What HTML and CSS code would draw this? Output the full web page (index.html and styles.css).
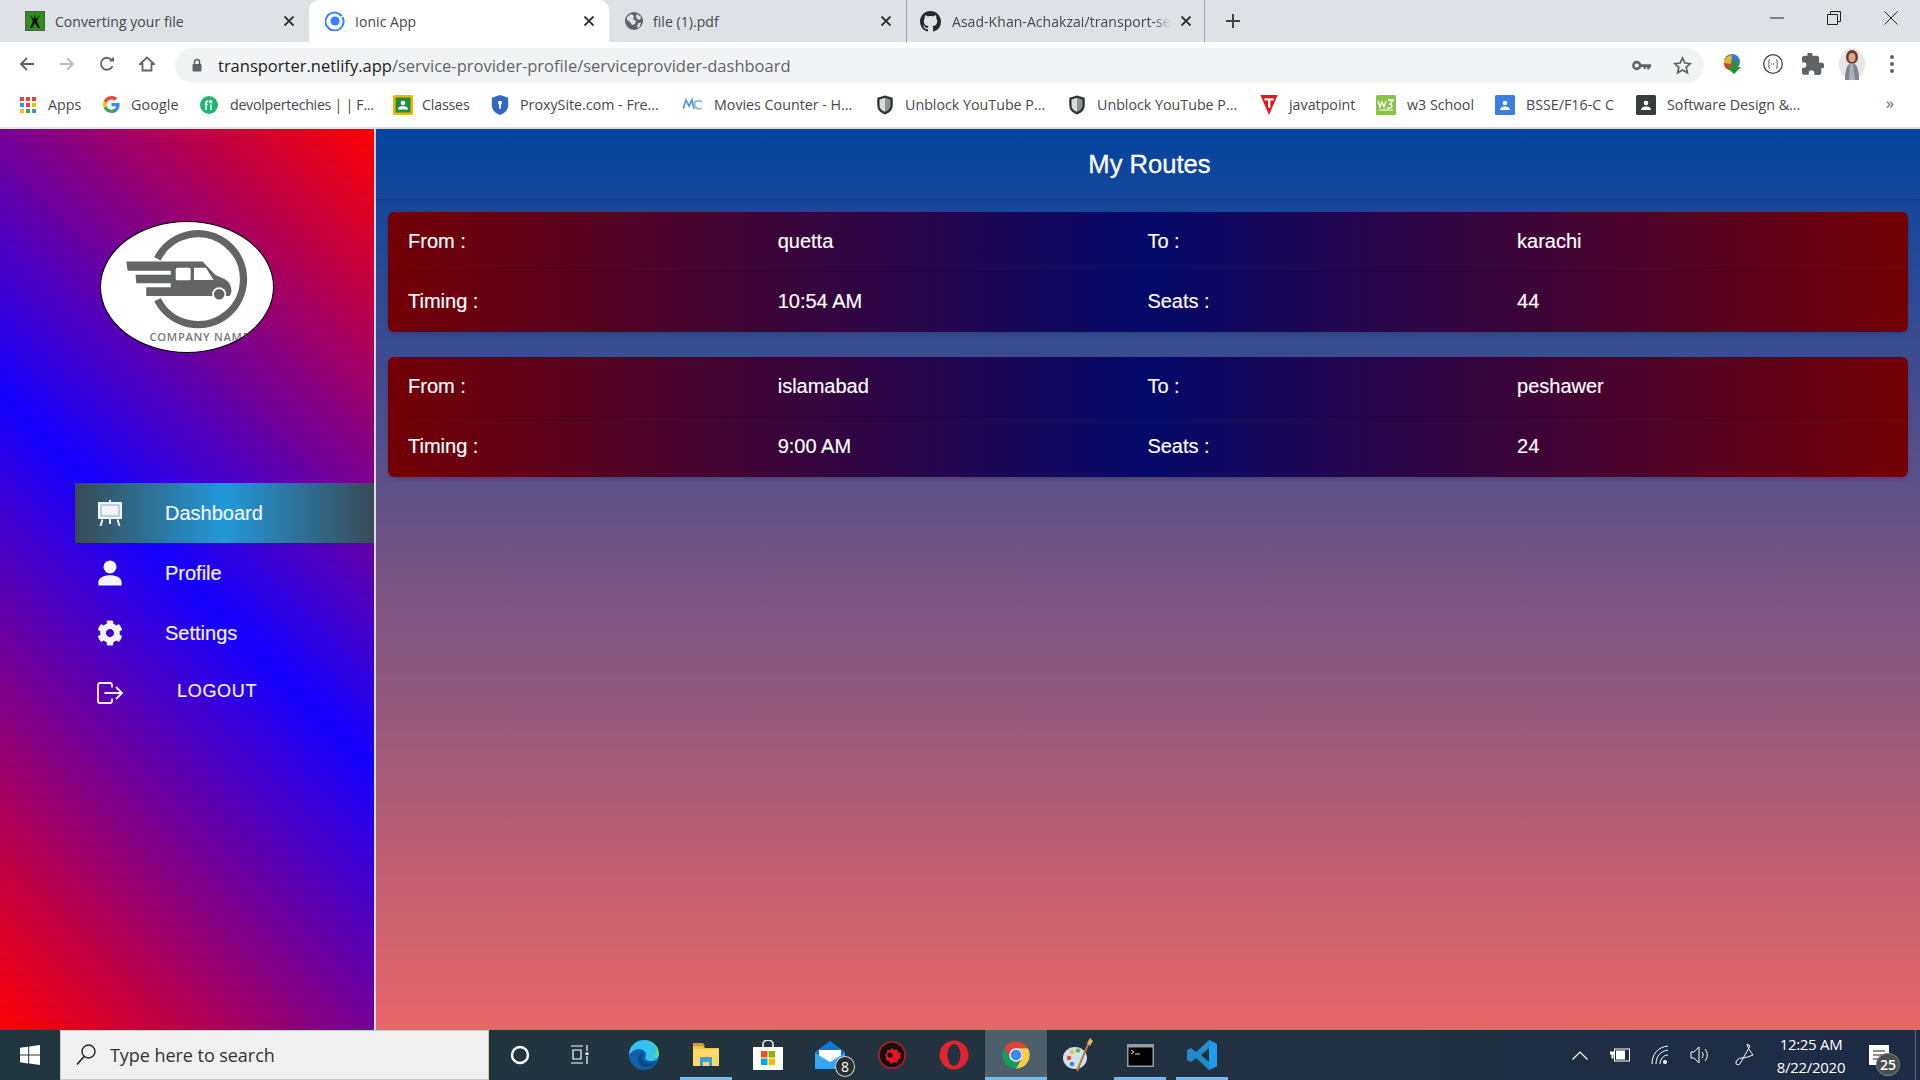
FILE: index.html
```html
<!DOCTYPE html>
<html lang="en">
<head>
<meta charset="utf-8">
<title>Ionic App</title>
<link rel="stylesheet" href="styles.css">
</head>
<body>
<div class="tabstrip">
  <div class="tab tab-a">
    <svg class="favicon" viewBox="0 0 20 20"><rect width="20" height="20" fill="#2f8f1e"/><rect width="20" height="20" fill="none" stroke="#555" stroke-width="2"/><path d="M10 3l1 5 4-4-3 6 3 7h-2l-3-5-3 5H5l3-7-3-6 4 4z" fill="#111"/></svg>
    <span class="tab-title">Converting your file</span>
    <svg class="tab-x" viewBox="0 0 12 12"><path d="M1.5 1.5l9 9M10.5 1.5l-9 9"/></svg>
  </div>
  <div class="tab tab-active">
    <svg class="favicon" viewBox="0 0 20 20"><circle cx="10" cy="10" r="4.6" fill="#3880ff"/><path d="M15.5 3.8A9 9 0 1 0 17.3 6" fill="none" stroke="#3880ff" stroke-width="2"/><circle cx="15.8" cy="4.2" r="1.3" fill="#3880ff"/></svg>
    <span class="tab-title">Ionic App</span>
    <svg class="tab-x" viewBox="0 0 12 12"><path d="M1.5 1.5l9 9M10.5 1.5l-9 9"/></svg>
  </div>
  <div class="tab tab-c">
    <svg class="favicon" viewBox="0 0 20 20"><circle cx="10" cy="10" r="9" fill="#5f6368"/><path d="M3 6l4-3 3 2-1 3 3 2-1 3-3 1-2-3-3-2zM13 3l4 3-1 3-3-1-1-3zM14 12l3 0-2 5-2-1z" fill="#dee1e6"/></svg>
    <span class="tab-title">file (1).pdf</span>
    <svg class="tab-x" viewBox="0 0 12 12"><path d="M1.5 1.5l9 9M10.5 1.5l-9 9"/></svg>
  </div>
  <div class="tab tab-d">
    <svg class="favicon favicon-gh" viewBox="0 0 16 16"><path fill="#24292e" d="M8 0C3.58 0 0 3.58 0 8c0 3.54 2.29 6.53 5.47 7.59.4.07.55-.17.55-.38 0-.19-.01-.82-.01-1.49-2.01.37-2.53-.49-2.69-.94-.09-.23-.48-.94-.82-1.13-.28-.15-.68-.52-.01-.53.63-.01 1.08.58 1.23.82.72 1.21 1.87.87 2.33.66.07-.52.28-.87.51-1.07-1.78-.2-3.64-.89-3.64-3.95 0-.87.31-1.59.82-2.15-.08-.2-.36-1.02.08-2.12 0 0 .67-.21 2.2.82.64-.18 1.32-.27 2-.27s1.36.09 2 .27c1.53-1.04 2.2-.82 2.2-.82.44 1.1.16 1.92.08 2.12.51.56.82 1.27.82 2.15 0 3.07-1.87 3.75-3.65 3.95.29.25.54.73.54 1.48 0 1.07-.01 1.93-.01 2.2 0 .21.15.46.55.38A8.01 8.01 0 0 0 16 8c0-4.42-3.58-8-8-8z"/></svg>
    <span class="tab-title"><span class="tab-fade">Asad-Khan-Achakzai/transport-se</span></span>
    <svg class="tab-x" viewBox="0 0 12 12"><path d="M1.5 1.5l9 9M10.5 1.5l-9 9"/></svg>
  </div>
  <svg class="newtab" viewBox="0 0 14 14"><path d="M7 0v14M0 7h14"/></svg>
  <div class="winbtns">
    <svg viewBox="0 0 14 14"><path d="M0 7h14"/></svg>
    <svg viewBox="0 0 14 14"><path d="M.5 3.5h10v10H.5zM3.5 3V.5h10v10H11"/></svg>
    <svg viewBox="0 0 14 14"><path d="M.5.5l13 13M13.500.5l-13 13"/></svg>
  </div>
</div>

<div class="toolbar">
  <div class="navs">
    <svg class="nav" viewBox="0 0 16 16"><path d="M15 8H2M8 2L2 8l6 6"/></svg>
    <svg class="nav nav-off" viewBox="0 0 16 16"><path d="M1 8h13M8 2l6 6-6 6"/></svg>
    <svg class="nav" viewBox="0 0 16 16"><path d="M13.500 10A6 6 0 1 1 13 4.500"/><path class="solid" d="M10 5.500h5v-5z"/></svg>
    <svg class="nav" viewBox="0 0 16 16"><path d="M8 1.500L1 8h2.500v6.500h9V8H15z"/></svg>
  </div>
  <div class="omnibox">
    <svg class="lock" viewBox="0 0 12 14"><path d="M3.500 6V4a2.500 2.500 0 0 1 5 0v2" fill="none" stroke="#5f6368" stroke-width="1.500"/><rect x="1.500" y="6" width="9" height="7.500" rx="1" fill="#5f6368"/></svg>
    <span class="url"><span class="url-host">transporter.netlify.app</span>/service-provider-profile/serviceprovider-dashboard</span>
    <svg class="key" viewBox="0 0 18 10"><circle cx="4.500" cy="5" r="3.200" fill="none" stroke="#5f6368" stroke-width="2.400"/><path d="M8 3.800h10v3h-1.500v2h-2v-2h-1.500v1.500h-2V6.500H8z" fill="#5f6368"/></svg>
    <svg class="star" viewBox="0 0 18 18"><path d="M9 1.800l2.200 4.800 5.200.6-3.900 3.500 1.100 5.200L9 13.300l-4.600 2.600 1.100-5.200L1.600 7.200l5.200-.6z"/></svg>
  </div>
  <div class="exts">
    <svg class="ext ext-idm" viewBox="0 0 22 22"><circle cx="12" cy="9" r="8" fill="#3b78c4"/><path d="M4 11a8 8 0 0 1 8-9l-1 9z" fill="#e9b22b"/><path d="M4 10c0 4 2 6 5 7l3-6z" fill="#d9412f"/><path d="M12 8h5v6h4l-7 7-8-7h6z" fill="#2f8f2e"/></svg>
    <svg class="ext" viewBox="0 0 22 22"><circle cx="11" cy="11" r="9.300" fill="#fff" stroke="#444" stroke-width="1.300"/><path d="M8 6.500c-1.500 0-1 2-1 3s-1 1.500-1 1.500 1 .5 1 1.500-.5 3 1 3M14 6.500c1.500 0 1 2 1 3s1 1.500 1 1.500-1 .5-1 1.500.5 3-1 3" fill="none" stroke="#444"/><path d="M9 11h4" stroke="#444" stroke-dasharray="1 1"/></svg>
    <svg class="ext" viewBox="0 0 18 18"><path fill="#5f6368" d="M15.500 8H14V4c0-1-.8-1.800-1.800-1.800h-3.700V1A2 2 0 0 0 4.500 1v1.200H1.900C.9 2.200 0 3 0 4v3.500h1.300a2.300 2.300 0 0 1 0 4.600H0v3.800c0 1 .9 1.900 1.900 1.900h3.600v-1.300a2.300 2.300 0 0 1 4.600 0V18h3.800c1 0 1.900-.9 1.900-1.900V12.500h.7a2.300 2.300 0 0 0 0-4.500z"/></svg>
    <svg class="avatar" viewBox="0 0 26 32"><ellipse cx="13" cy="16" rx="13" ry="16" fill="#e9e7e4"/><ellipse cx="13" cy="9" rx="6" ry="7" fill="#6d3b2a"/><ellipse cx="13" cy="9.500" rx="3.500" ry="4.500" fill="#d9a98e"/><path d="M6 32c0-12 3-17 7-17s7 5 7 17z" fill="#7d8793"/><path d="M11 16l3 0 2 16h-6z" fill="#a9b0b8"/></svg>
    <svg class="kebab" viewBox="0 0 4 18"><circle cx="2" cy="2" r="2"/><circle cx="2" cy="9" r="2"/><circle cx="2" cy="16" r="2"/></svg>
  </div>
</div>

<div class="bookmarks">
  <div class="bm bm1"><svg class="bmi bmi-apps" viewBox="0 0 16 16"><g fill="#ea4335"><rect width="4" height="4"/><rect x="6" width="4" height="4"/><rect x="12" width="4" height="4"/></g><g fill="#fbbc05"><rect y="12" width="4" height="4"/></g><rect y="6" width="4" height="4" fill="#4285f4"/><rect x="6" y="6" width="4" height="4" fill="#ea4335"/><rect x="12" y="6" width="4" height="4" fill="#fbbc05"/><rect x="6" y="12" width="4" height="4" fill="#34a853"/><rect x="12" y="12" width="4" height="4" fill="#4285f4"/></svg><span>Apps</span></div>
  <div class="bm bm2"><svg class="bmi" viewBox="0 0 18 18"><path fill="#4285f4" d="M17.600 9.200c0-.6-.1-1.200-.2-1.800H9v3.500h4.800a4 4 0 0 1-1.800 2.700v2.200h2.900c1.700-1.600 2.700-3.900 2.700-6.600z"/><path fill="#34a853" d="M9 18c2.400 0 4.500-.8 5.900-2.200L12 13.600c-.8.500-1.800.9-3 .9-2.300 0-4.300-1.600-5-3.700H1v2.300A9 9 0 0 0 9 18z"/><path fill="#fbbc05" d="M4 10.700a5.400 5.400 0 0 1 0-3.400V5H1a9 9 0 0 0 0 8z"/><path fill="#ea4335" d="M9 3.600c1.300 0 2.500.5 3.400 1.300l2.600-2.600A9 9 0 0 0 1 5l3 2.300c.7-2.100 2.700-3.700 5-3.700z"/></svg><span>Google</span></div>
  <div class="bm bm3"><svg class="bmi" viewBox="0 0 18 18"><circle cx="9" cy="9" r="9" fill="#21b573"/><path d="M6 14V7.500c0-2 1-2.500 2.300-2.500M4.700 8.500h3M11 8.500V14M10 5h1.500v1.500H10z" fill="none" stroke="#fff" stroke-width="1.500"/></svg><span>devolpertechies | | F...</span></div>
  <div class="bm bm4"><svg class="bmi bmi-wide" viewBox="0 0 20 20"><rect width="20" height="20" rx="1.500" fill="#f4b400"/><rect x="2.500" y="2.500" width="15" height="15" fill="#1e8e3e"/><circle cx="10" cy="8" r="2.300" fill="#fff"/><path d="M5 14.500c0-2.500 2.500-3.500 5-3.500s5 1 5 3.500z" fill="#fff"/></svg><span>Classes</span></div>
  <div class="bm bm5"><svg class="bmi" viewBox="0 0 18 22"><path d="M9 0l9 3v8c0 6-4 9-9 11-5-2-9-5-9-11V3z" fill="#3367c4"/><circle cx="9" cy="8.500" r="2.200" fill="#fff"/><rect x="8" y="9" width="2" height="6" fill="#fff"/></svg><span>ProxySite.com - Fre...</span></div>
  <div class="bm bm6"><svg class="bmi bmi-wide" viewBox="0 0 20 14"><path d="M0 11L3 2l3 6 3-6 2 9" fill="none" stroke="#5a9bd5" stroke-width="1.800"/><path d="M19 4c-5-3-9 0-7 4s5 3 7 2" fill="none" stroke="#9bb9d6" stroke-width="1.800"/></svg><span>Movies Counter - H...</span></div>
  <div class="bm bm7"><svg class="bmi" viewBox="0 0 18 22"><path d="M9 .5l8.500 2.500v8c0 5.500-3.500 8.500-8.500 10.500C4 19.500.5 16.500.5 11V3z" fill="#2f3337"/><path d="M9 3L3 5v6c0 4 2.500 6 6 7.500z" fill="#d9dbdc"/><path d="M9 3l6 2v6c0 4-2.500 6-6 7.500z" fill="#8f9396"/></svg><span>Unblock YouTube P...</span></div>
  <div class="bm bm8"><svg class="bmi" viewBox="0 0 18 22"><path d="M9 .5l8.500 2.500v8c0 5.500-3.500 8.500-8.500 10.500C4 19.500.5 16.500.5 11V3z" fill="#2f3337"/><path d="M9 3L3 5v6c0 4 2.500 6 6 7.500z" fill="#d9dbdc"/><path d="M9 3l6 2v6c0 4-2.500 6-6 7.500z" fill="#8f9396"/></svg><span>Unblock YouTube P...</span></div>
  <div class="bm bm9"><svg class="bmi" viewBox="0 0 19 22"><path d="M0 0h19l-9.500 22z" fill="#e8141c"/><path d="M4.500 3.500h10v2.500h-3.500v8H8.500V6h-4z" fill="#fff"/></svg><span>javatpoint</span></div>
  <div class="bm bm10"><svg class="bmi bmi-wide" viewBox="0 0 20 20"><rect width="20" height="20" rx="1.500" fill="#8bc34a"/><path d="M2 6l2 6 2-5 2 5 2-6M12 5h5l-3 4c3 0 3 5-3 4" fill="none" stroke="#fff" stroke-width="1.300"/><path d="M3 15h14" stroke="#d7edbd" stroke-width="1.500"/></svg><span>w3 School</span></div>
  <div class="bm bm11"><svg class="bmi bmi-wide" viewBox="0 0 20 20"><rect width="20" height="20" rx="1.500" fill="#3b7de0"/><circle cx="10" cy="8" r="2.300" fill="#fff"/><path d="M5 15c0-2.500 2.500-3.500 5-3.500s5 1 5 3.500z" fill="#fff"/></svg><span>BSSE/F16-C C</span></div>
  <div class="bm bm12"><svg class="bmi bmi-wide" viewBox="0 0 20 20"><rect width="20" height="20" rx="1.500" fill="#3a3d40"/><circle cx="10" cy="8" r="2.300" fill="#fff"/><path d="M5 15c0-2.500 2.500-3.500 5-3.500s5 1 5 3.500z" fill="#fff"/></svg><span>Software Design &amp;...</span></div>
  <div class="bm-more">»</div>
</div>

<div class="app">
  <aside class="sidebar">
    <div class="logo">
      <svg class="logo-art" viewBox="122 65 518 392">
        <path d="M292 176A137 137 0 1 1 292 299" fill="none" stroke="#636466" stroke-width="22"/>
        <path fill="#636466" d="M198 184H428L466 224L495 238Q516 250 515 276L510 288H258L258 262H332V250H228L226 224H332V212H202Z"/>
        <rect x="347" y="203" width="45" height="38" rx="5" fill="#fff"/>
        <path d="M402 203H438L461 240H402Z" fill="#fff"/>
        <circle cx="478" cy="283" r="21" fill="#fff"/>
        <circle cx="478" cy="283" r="16" fill="#636466"/>
        <text class="logo-text" x="268" y="424">COMPANY NAME</text>
      </svg>
    </div>
    <nav class="menu">
      <a class="menu-item menu-active">
        <svg class="menu-icon" viewBox="0 0 26 26"><path d="M13 0v2" stroke="#f3f4fa" stroke-width="2"/><rect x="1" y="2" width="24" height="17" fill="#f3f4fa"/><rect x="3.500" y="4.500" width="19" height="12" fill="#2c6e8d" opacity=".55"/><rect x="4.500" y="5.500" width="17" height="10" fill="#f3f4fa"/><path d="M5.500 19.500L3.500 26M13 19v5M20.500 19.500l2 6.500" stroke="#f3f4fa" stroke-width="2" fill="none"/></svg>
        <span>Dashboard</span>
      </a>
      <a class="menu-item">
        <svg class="menu-icon" viewBox="0 0 26 28"><circle cx="13" cy="7.500" r="7" fill="#f3f4fa"/><path d="M.5 27.500V24c0-5 6-7.500 12.500-7.500S25.500 19 25.500 24v3.500z" fill="#f3f4fa"/></svg>
        <span>Profile</span>
      </a>
      <a class="menu-item">
        <svg class="menu-icon" viewBox="0 0 512 512"><path fill="#f3f4fa" d="M487.400 315.700l-42.600-24.600c4.300-23.200 4.300-47 0-70.200l42.600-24.600c4.900-2.800 7.100-8.600 5.500-14-11.100-35.600-30-67.800-54.700-94.600-3.800-4.100-10-5.100-14.800-2.300L380.800 110c-17.900-15.400-38.500-27.300-60.800-35.100V25.800c0-5.600-3.900-10.500-9.400-11.700-36.700-8.200-74.300-7.800-109.200 0-5.500 1.200-9.400 6.100-9.400 11.700V75c-22.200 7.900-42.800 19.800-60.800 35.100L88.700 85.500c-4.900-2.800-11-1.900-14.800 2.300-24.700 26.700-43.600 58.900-54.700 94.600-1.700 5.400.6 11.200 5.500 14L67.300 221c-4.300 23.200-4.300 47 0 70.200l-42.600 24.600c-4.900 2.800-7.100 8.600-5.500 14 11.100 35.600 30 67.800 54.700 94.600 3.800 4.100 10 5.100 14.800 2.300l42.600-24.600c17.900 15.400 38.500 27.300 60.800 35.100v49.200c0 5.600 3.900 10.500 9.400 11.700 36.700 8.200 74.300 7.800 109.200 0 5.500-1.200 9.400-6.100 9.400-11.700v-49.200c22.200-7.900 42.800-19.800 60.800-35.100l42.600 24.600c4.900 2.800 11 1.900 14.800-2.300 24.700-26.700 43.600-58.900 54.700-94.600 1.500-5.500-.7-11.300-5.600-14.100zM256 336c-44.100 0-80-35.900-80-80s35.900-80 80-80 80 35.900 80 80-35.900 80-80 80z"/></svg>
        <span>Settings</span>
      </a>
      <a class="menu-item menu-logout">
        <svg class="menu-icon" viewBox="0 0 26 22"><path d="M15 5.500V3c0-1.200-.8-2-2-2H3C1.800 1 1 1.800 1 3v16c0 1.200.8 2 2 2h10c1.200 0 2-.8 2-2v-2.500M7.500 11H24.500M19 5l6 6-6 6" fill="none" stroke="#f3f4fa" stroke-width="1.800"/></svg>
        <span>LOGOUT</span>
      </a>
    </nav>
  </aside>
  <main class="content">
    <header class="header"><h1>My Routes</h1></header>
    <section class="routes">
      <article class="card">
        <div class="row row-line"><span>From :</span><span>quetta</span><span>To :</span><span>karachi</span></div>
        <div class="row row-last"><span>Timing :</span><span>10:54 AM</span><span>Seats :</span><span>44</span></div>
      </article>
      <article class="card">
        <div class="row row-line"><span>From :</span><span>islamabad</span><span>To :</span><span>peshawer</span></div>
        <div class="row row-last"><span>Timing :</span><span>9:00 AM</span><span>Seats :</span><span>24</span></div>
      </article>
    </section>
  </main>
</div>

<footer class="taskbar">
  <svg class="win" viewBox="0 0 20 20"><path fill="#fff" d="M0 2.800l8.200-1.100v7.900H0zM9.200 1.500L20 0v9.600H9.200zM0 10.500h8.200v7.900L0 17.200zM9.200 10.500H20V20L9.200 18.500z"/></svg>
  <div class="search">
    <svg class="search-icon" viewBox="0 0 20 22"><circle cx="12.500" cy="7.500" r="6.500" fill="none" stroke="#222" stroke-width="1.400"/><path d="M8 12.500L1 20.500" stroke="#222" stroke-width="1.600"/></svg>
    <span>Type here to search</span>
  </div>
  <div class="tasks">
    <div class="task"><svg class="ti ti-cortana" viewBox="0 0 20 20"><circle cx="10" cy="10" r="8" fill="none" stroke="#fff" stroke-width="2.400"/></svg></div>
    <div class="task task-view"><svg class="ti ti-view" viewBox="0 0 20 20"><path d="M1 1h12M3 5h8v9H3zM1 18h12M17 0v6M17 11v8" fill="none" stroke="#fff" stroke-width="1.200"/><rect x="15.500" y="7.500" width="3" height="2.500" fill="#fff"/></svg></div>
    <div class="task"><svg class="ti" viewBox="0 0 30 30"><circle cx="15" cy="15" r="15" fill="#0d62ab"/><path d="M0 15C0 6 7 0 15 0c9 0 15 7 15 14 0 5-4 7-8 7-3 0-6-1-6-3 0-1 1-1 1-3 0-3-3-6-7-6-6 0-10 6-10 6z" fill="#35c1f1"/><path d="M30 14c0-7-6-14-15-14 6 0 11 4 12 9 1 4-1 6-4 7 4 2 7 1 7-2z" fill="#5fd97a"/><path d="M9 21c1 4 4 6 8 6 4 0 8-2 10-5-3 2-9 2-12-.5-3-2.500-3-7-1-9-3 1-6 5-5 8.500z" fill="#0a4a85"/></svg></div>
    <div class="task task-run"><svg class="ti ti-28" viewBox="0 0 28 28"><path d="M1 4h10l2 3h14v18H1z" fill="#f2c14b"/><path d="M1 2h10l2 3H1z" fill="#d39a22"/><path d="M1 8h26v17H1z" fill="#ffd767"/><path d="M8 25v-9h12v9h-3v-4h-6v4z" fill="#3f9fe6"/></svg></div>
    <div class="task"><svg class="ti ti-30" viewBox="0 0 30 30"><path d="M10 8V4a5 4 0 0 1 10 0v4" fill="none" stroke="#d9d9d9" stroke-width="1.800"/><rect y="7" width="30" height="23" fill="#fff"/><rect x="8" y="11" width="6.500" height="6.500" fill="#f25022"/><rect x="15.500" y="11" width="6.500" height="6.500" fill="#7fba00"/><rect x="8" y="18.500" width="6.500" height="6.500" fill="#00a4ef"/><rect x="15.500" y="18.500" width="6.500" height="6.500" fill="#ffb900"/></svg></div>
    <div class="task"><svg class="ti ti-30" viewBox="0 0 30 30"><path d="M15 1L0 12v17h30V12z" fill="#0f78d4"/><path d="M4 10h22v8l-11 6-11-6z" fill="#fff"/><path d="M0 13l15 9 15-9v16H0z" fill="#35a6ef"/></svg><span class="badge">8</span></div>
    <div class="task"><svg class="ti ti-28" viewBox="0 0 28 28"><circle cx="14" cy="14" r="13" fill="#111" stroke="#c8161d" stroke-width="1.500"/><path d="M14 7l2 2 3-1 1 3 3 1-1 3 1 2-3 2-1 3-3-1-3 2-2-3-3-1 0-3-1-2 2-2 0-3 3 0z" fill="#e3171e"/><circle cx="12" cy="14" r="2.500" fill="#111"/><path d="M18 10l3 4h-2v5h-2v-5h-2z" fill="#e3171e"/></svg></div>
    <div class="task"><svg class="ti ti-30" viewBox="0 0 30 30"><circle cx="15" cy="15" r="14.500" fill="#e0232e"/><ellipse cx="15" cy="15" rx="6.500" ry="11" fill="#22333f"/></svg></div>
    <div class="task task-on"><svg class="ti ti-28" viewBox="3.500 3.500 41 41"><path fill="#db4437" d="M24 4A20 20 0 0 1 41.320 14H24A10 10 0 0 0 15.340 29L6.680 14A20 20 0 0 1 24 4z"/><path fill="#0f9d58" d="M6.680 14L15.340 29A10 10 0 0 0 32.660 29L24 44A20 20 0 0 1 6.680 14z"/><path fill="#ffcd40" d="M41.320 14A20 20 0 0 1 24 44L32.660 29A10 10 0 0 0 24 14z"/><circle cx="24" cy="24" r="10" fill="#fff"/><circle cx="24" cy="24" r="8" fill="#4285f4"/></svg></div>
    <div class="task"><svg class="ti" viewBox="0 0 30 34"><ellipse cx="12" cy="20" rx="12" ry="11" fill="#cfe2ef"/><circle cx="6" cy="20" r="2.300" fill="#e2473a"/><circle cx="9" cy="14" r="2.300" fill="#f3c33b"/><circle cx="15" cy="12.500" r="2.300" fill="#5cb85c"/><circle cx="9" cy="26" r="2.300" fill="#3d8dd6"/><path d="M14 33L26 4" stroke="#b57a3a" stroke-width="2"/><path d="M24 5l3-5 3 3-3 5z" fill="#e5b272"/></svg></div>
    <div class="task task-run"><svg class="ti ti-term" viewBox="0 0 27 23"><rect width="27" height="23" fill="#9a9da0"/><rect x="1.500" y="3.500" width="24" height="18" fill="#000"/><path d="M4 6l3 2-3 2M8 10h5" stroke="#ddd" stroke-width="1" fill="none"/></svg></div>
    <div class="task task-run"><svg class="ti ti-30" viewBox="0 0 30 30"><path d="M22 0l8 4v22l-8 4L9 18l-5 4-4-2V10l4-2 5 4z" fill="#2489ca"/><path d="M22 8l-8 7 8 7z" fill="#22303c"/><path d="M22 0l8 4v22l-8 4z" fill="#1f9cf0"/></svg></div>
  </div>
  <div class="tray">
    <svg class="chev" viewBox="0 0 16 9"><path d="M.500 8.500L8 1l7.500 7.500"/></svg>
    <svg class="tri tri-bat" viewBox="0 0 20 13"><rect x="4.500" y=".5" width="15" height="12" fill="none" stroke="#fff"/><rect x="6" y="2" width="9" height="9" fill="#fff"/><path d="M0 3h5v3H3.500v4h-2V6H0z" fill="#fff"/></svg>
    <svg class="tri" viewBox="0 0 18 20"><path d="M1 19C1 9 7 2 17 1M5 19C5 12 9 6 17 5M9 19c0-4 3-9 8-9" fill="none" stroke="#fff" stroke-width="1"/><circle cx="14" cy="17" r="2" fill="#fff"/></svg>
    <svg class="tri tri-vol" viewBox="0 0 20 20"><path d="M1 7h3l5-5v16l-5-5H1zM12 7c1.500 2 1.500 4 0 6M15 4c3 4 3 8 0 12" fill="none" stroke="#fff" stroke-width="1"/></svg>
    <svg class="tri tri-pen" viewBox="0 0 20 24"><path d="M12 1l3 2-9 16c-1 3-5 4-5 1s3-5 6-5c4 0 8-2 11-3-2-3-5-6-6-11z" fill="none" stroke="#fff" stroke-width="1"/></svg>
    <div class="clock"><div>12:25 AM</div><div>8/22/2020</div></div>
    <div class="notif">
      <svg class="notif-icon" viewBox="0 0 20 20"><rect width="20" height="20" fill="#fff"/><path d="M4 6h12M4 10h12M4 14h12" stroke="#222" stroke-width="1.200"/></svg>
      <span class="notif-count">25</span>
    </div>
  </div>
</footer>
</body>
</html>
```

FILE: styles.css
```css
* { box-sizing: border-box; }
html, body { margin: 0; height: 100%; }
body {
  width: 1920px; height: 1080px; overflow: hidden;
  display: flex; flex-direction: column;
  font-family: "Liberation Sans", Arial, sans-serif;
}
svg { display: block; flex: none; }

/* browser chrome */
.tabstrip {
  height: 42px; flex: none; background: #dee1e6;
  display: flex; align-items: stretch; padding-left: 9px;
  font-family: "Open Sans", sans-serif; font-size: 14px; letter-spacing: .05px; color: #45484d;
}
.tab { width: 300px; display: flex; align-items: center; padding-left: 16px; padding-right: 14px; flex: none; }
.tab-active { background: #fff; border-radius: 10px 10px 0 0; }
.tab-c { width: 298px; border-right: 1px solid #9ea1a6; padding-left: 15px; }
.tab-c .favicon { margin-right: 9px; }
.tab-d { width: 298px; border-right: 1px solid #9ea1a6; padding-left: 13px; padding-right: 12px; }
.favicon { width: 20px; height: 20px; margin-right: 10px; }
.favicon-gh { margin-right: 11px; width: 21px; height: 21px; }
.tab-title { flex: 1; white-space: nowrap; }
.tab-fade { display: inline-block; -webkit-mask-image: linear-gradient(90deg, #000 92%, transparent); mask-image: linear-gradient(90deg, #000 92%, transparent); }
.tab-x { width: 12px; height: 12px; fill: none; stroke: #333; stroke-width: 1.800; }
.newtab { width: 14px; height: 14px; margin: 14px 0 0 21px; fill: none; stroke: #444; stroke-width: 2; }
.winbtns { margin-left: auto; display: flex; gap: 43px; padding: 11px 22px 0 0; }
.winbtns svg { width: 14px; height: 14px; fill: none; stroke: #222; stroke-width: 1; }

.toolbar { height: 42px; flex: none; background: #fff; display: flex; align-items: center; }
.navs { display: flex; gap: 24px; padding: 1px 0 0 19px; width: 175px; }
.nav { width: 16px; height: 16px; fill: none; stroke: #5f6368; stroke-width: 1.800; }
.nav-off { stroke: #b9bbbe; }
.nav .solid { fill: #5f6368; stroke: none; }
.omnibox {
  width: 1529px; height: 35px; margin-top: 4px; background: #f1f3f4; border-radius: 18px;
  display: flex; align-items: center; padding-left: 16px;
  font-family: "Open Sans", sans-serif; font-size: 16.500px; color: #5f6368;
}
.lock { width: 12px; height: 14px; margin-right: 15px; }
.url { flex: 1; white-space: nowrap; }
.url-host { color: #202124; }
.key { width: 19px; height: 11px; margin-right: 22px; }
.star { width: 19px; height: 19px; margin-right: 12px; fill: none; stroke: #5f6368; stroke-width: 1.600; }
.exts { display: flex; align-items: center; padding: 2px 0 0 16px; }
.ext { width: 22px; height: 22px; margin-right: 18px; }
.ext-idm { margin-right: 20px; }
.avatar { width: 26px; height: 32px; margin-right: 22px; margin-left: -3px; }
.kebab { width: 4px; height: 18px; fill: #5f6368; margin-left: 3px; }

.bookmarks {
  height: 45px; flex: none; background: #fff; border-bottom: 2px solid #e3e3e3;
  display: flex; align-items: center; padding: 0 0 2px 20px;
  font-family: "Open Sans", sans-serif; font-size: 14.250px; color: #45484d;
}
.bm { display: flex; align-items: center; gap: 11px; white-space: nowrap; flex: none; }
.bmi { width: 18px; height: 20px; }
.bmi-wide { width: 20px; height: 20px; }
.bmi-apps { width: 16px; height: 16px; margin-right: 1px; }
.bm1 { width: 83px; }
.bm2 { width: 97px; }
.bm2 .bmi { width: 17px; height: 17px; }
.bm2 span { letter-spacing: .15px; }
.bm3 { width: 193px; }
.bm3 span { letter-spacing: -.3px; margin-left: 1px; }
.bm4 { width: 98px; gap: 9px; }
.bm4 span { letter-spacing: -.2px; }
.bm5 { width: 192px; }
.bm6 { width: 193px; }
.bm7 { width: 192px; }
.bm8 { width: 192px; }
.bm9 { width: 116px; }
.bm10 { width: 119px; }
.bm11 { width: 141px; }
.bm12 { width: 250px; }
.bm-more { font-size: 16px; color: #5f6368; margin-top: -3px; }

/* page */
.app { flex: 1; min-height: 0; display: flex; }
.sidebar {
  width: 376px; flex: none; border-right: 2px solid #d9d9e6;
  background: linear-gradient(45deg, #ff0000, #1400ff, #ff0000);
  padding-top: 92px;
}
.logo {
  width: 174px; height: 132px; margin-left: 100px; border-radius: 50%;
  border: 1px solid #000; background: #fff; overflow: hidden;
}
.logo-art { width: 172px; height: 130px; }
.logo-text { font: 600 34px "Open Sans", sans-serif; fill: #77787a; letter-spacing: 2px; }
.menu { margin: 130px 0 0 75px; color: #f3f4fa; font-size: 20px; -webkit-text-stroke: .15px #f3f4fa; }
.menu-item { height: 60px; display: flex; align-items: center; padding-left: 22px; gap: 42px; }
.menu-icon { width: 26px; height: 26px; }
.menu-active { background: linear-gradient(90deg, #394a56, #2299d8 50%, #394a56); }
.menu-logout span { font-size: 18px; letter-spacing: .7px; margin: -3px 0 0 12px; }

.content {
  flex: 1; min-width: 0; display: flex; flex-direction: column;
  background: linear-gradient(180deg, #03449f, #e96568);
}
.header {
  height: 70px; flex: none; display: flex; align-items: center; justify-content: center; padding-left: 3px;
  box-shadow: 0 1px 3px rgba(0, 0, 0, .22);
}
.header h1 { margin: 0; font-size: 25.600px; font-weight: 400; color: #fff; -webkit-text-stroke: .3px #fff; }
.routes { padding: 13px 12px 0; display: flex; flex-direction: column; gap: 25px; }
.card {
  height: 120px; padding-left: 20px; border-radius: 6px; color: #fff; font-size: 20px;
  -webkit-text-stroke: .15px #fff;
  background: linear-gradient(90deg, #740006, #05096a 50%, #740006);
  box-shadow: 0 2px 4px rgba(0, 0, 0, .18);
}
.row { height: 60px; display: grid; grid-template-columns: repeat(4, 369.700px); align-items: center; }
.row-line { border-bottom: 1px solid rgba(0, 0, 0, .13); }
.row-last { padding-bottom: 1px; }

/* taskbar */
.taskbar {
  height: 50px; flex: none; display: flex; align-items: center;
  background: linear-gradient(90deg, #22363f, #22333f 50%, #1d2b45);
}
.win { width: 20px; height: 20px; margin: 0 20px; }
.search {
  width: 429px; height: 50px; background: #f0f0f0; border: 1px solid #c9c9c9;
  display: flex; align-items: center; padding-left: 15px; gap: 14px;
  font-family: "Open Sans", sans-serif; font-size: 18px; letter-spacing: -.05px; color: #333;
}
.search-icon { width: 20px; height: 22px; }
.tasks { display: flex; height: 50px; }
.task { width: 62px; height: 50px; display: flex; align-items: center; justify-content: center; position: relative; }
.task-view { padding-right: 4px; }
.ti { width: 30px; height: 34px; }
.ti-cortana { width: 20px; height: 20px; }
.ti-view { width: 20px; height: 20px; }
.ti-28 { width: 28px; height: 28px; }
.ti-30 { width: 30px; height: 30px; }
.ti-term { width: 27px; height: 23px; }
.task-run::after, .task-on::after {
  content: ""; position: absolute; left: 5px; right: 5px; bottom: 0; height: 3px; background: #76b9ed;
}
.task-on { background: #4d5f6a; }
.task-on::after { left: 0; right: 0; }
.badge {
  position: absolute; right: 6px; bottom: 3px; width: 20px; height: 21px; border-radius: 50%;
  background: #2b2d30; border: 1px solid #cfd3d6; color: #fff; font: 14px/19px "Open Sans", sans-serif; text-align: center;
}
.tray { margin-left: auto; margin-right: 4px; display: flex; align-items: center; color: #fff; }
.chev { width: 16px; height: 9px; fill: none; stroke: #fff; stroke-width: 1.200; margin-right: 22px; }
.tri { width: 20px; height: 20px; margin-right: 20px; }
.tri-bat { height: 14px; }
.tri-vol { margin-right: 25px; }
.tri-pen { height: 24px; margin-right: 11px; }
.clock { width: 90px; text-align: center; font: 15px/23px "Open Sans", sans-serif; letter-spacing: -.3px; margin-top: 1px; }
.notif { width: 60px; height: 50px; position: relative; padding: 15px 0 0 13px; border-right: 1px solid #666; }
.notif-icon { width: 20px; height: 20px; }
.notif-count {
  position: absolute; left: 20px; top: 23px; width: 24px; height: 23px; border-radius: 50%;
  background: #4b4f52; border: 1px solid #777; color: #fff; font: 600 14px/21px "Open Sans", sans-serif; text-align: center;
}
```
